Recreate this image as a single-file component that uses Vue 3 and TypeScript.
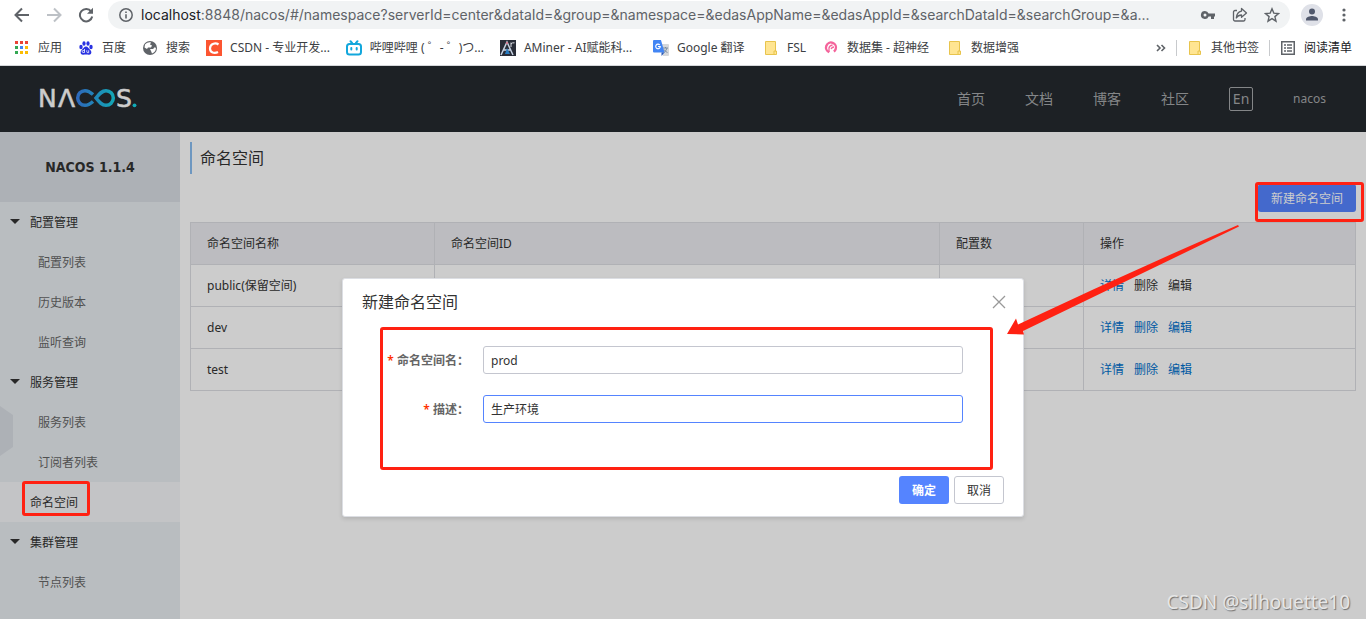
<script setup lang="ts">
import { ref } from 'vue'

interface Bookmark { icon: string; label: string }
interface MenuItem { label: string; kind: 'group' | 'sub' | 'active' }
interface Row { name: string; locked: boolean }

const url = '/nacos/#/namespace?serverId=center&dataId=&group=&namespace=&edasAppName=&edasAppId=&searchDataId=&searchGroup=&a...'

const bookmarks: Bookmark[] = [
  { icon: 'apps', label: '应用' },
  { icon: 'paw', label: '百度' },
  { icon: 'globe', label: '搜索' },
  { icon: 'csdn', label: 'CSDN - 专业开发...' },
  { icon: 'bili', label: '哔哩哔哩 (  ゜- ゜)つ...' },
  { icon: 'aminer', label: 'AMiner - AI赋能科...' },
  { icon: 'translate', label: 'Google 翻译' },
  { icon: 'folder', label: 'FSL' },
  { icon: 'ring', label: '数据集 - 超神经' },
  { icon: 'folder', label: '数据增强' },
]

const gridColors = ['#ea4335', '#ea4335', '#ea4335', '#34a853', '#4285f4', '#fbbc04', '#34a853', '#fbbc04', '#fbbc04']

const nav = ['首页', '文档', '博客', '社区']

const menu: MenuItem[] = [
  { label: '配置管理', kind: 'group' },
  { label: '配置列表', kind: 'sub' },
  { label: '历史版本', kind: 'sub' },
  { label: '监听查询', kind: 'sub' },
  { label: '服务管理', kind: 'group' },
  { label: '服务列表', kind: 'sub' },
  { label: '订阅者列表', kind: 'sub' },
  { label: '命名空间', kind: 'active' },
  { label: '集群管理', kind: 'group' },
  { label: '节点列表', kind: 'sub' },
]

const rows: Row[] = [
  { name: 'public(保留空间)', locked: true },
  { name: 'dev', locked: false },
  { name: 'test', locked: false },
]

const namespaceName = ref('prod')
const description = ref('生产环境')
</script>

<template>
  <div class="window">
    <header class="browser">
      <div class="toolbar">
        <button class="tool" aria-label="Back">
          <svg width="16" height="16" viewBox="0 0 16 16" fill="none" stroke="#5f6368" stroke-width="2"><path d="M15 8H2M8 1.500L1.500 8L8 14.500" /></svg>
        </button>
        <button class="tool" aria-label="Forward">
          <svg width="16" height="16" viewBox="0 0 16 16" fill="none" stroke="#bdc1c6" stroke-width="2"><path d="M1 8h13M8 1.500L14.500 8L8 14.500" /></svg>
        </button>
        <button class="tool" aria-label="Reload">
          <svg width="16" height="16" viewBox="0 0 16 16"><path d="M13.200 4.600A6.200 6.200 0 1 0 14.200 9.500" fill="none" stroke="#5f6368" stroke-width="2" /><path d="M15 .8v6H9z" fill="#5f6368" /></svg>
        </button>
        <div class="omnibox">
          <svg width="14" height="14" viewBox="0 0 14 14"><circle cx="7" cy="7" r="6.200" fill="none" stroke="#5f6368" stroke-width="1.500" /><path d="M7 6.200v4.300M7 3.500v1.600" stroke="#5f6368" stroke-width="1.600" /></svg>
          <span class="address"><b>localhost</b>:8848{{ url }}</span>
          <button class="tool" aria-label="Passwords">
            <svg width="16" height="16" viewBox="0 0 16 16" fill="#5f6368"><path fill-rule="evenodd" d="M5 4a4 4 0 1 0 3.600 5.500H11V12h3V9.500h1v-3H8.600A4 4 0 0 0 5 4zm0 2.500a1.500 1.500 0 1 1 0 3a1.500 1.500 0 0 1 0-3z" /></svg>
          </button>
          <button class="tool" aria-label="Share">
            <svg width="16" height="16" viewBox="0 0 16 16" fill="none" stroke="#5f6368" stroke-width="1.300" stroke-linejoin="round"><path d="M5 3.500H3A1.500 1.500 0 0 0 1.500 5v7.500A1.500 1.500 0 0 0 3 14h8.500a1.500 1.500 0 0 0 1.500-1.500V11" /><path d="M9.500 1.500L14.500 6L9.500 10.300V8C7 8 5.500 9 4.300 11C4.600 7.500 6.300 4.600 9.500 4.100z" /></svg>
          </button>
          <button class="tool" aria-label="Bookmark this page">
            <svg width="16" height="16" viewBox="0 0 16 16" fill="none" stroke="#5f6368" stroke-width="1.400"><path d="M8 1.800l1.800 4.300 4.700.4-3.600 3.100 1.100 4.600L8 11.700l-4 2.500 1.100-4.600L1.500 6.500l4.700-.4z" /></svg>
          </button>
        </div>
        <button class="avatar" aria-label="Profile">
          <svg width="22" height="22" viewBox="0 0 22 22"><circle cx="11" cy="11" r="11" fill="#dfe1e8" /><circle cx="11" cy="7.500" r="3" fill="#50586c" /><path d="M5 16.500v-1.300c0-2.200 4-3.200 6-3.200s6 1 6 3.200v1.300z" fill="#50586c" /></svg>
        </button>
        <button class="tool" aria-label="Menu">
          <svg width="16" height="16" viewBox="0 0 16 16" fill="#5f6368"><circle cx="8" cy="3" r="1.600" /><circle cx="8" cy="8" r="1.600" /><circle cx="8" cy="13" r="1.600" /></svg>
        </button>
      </div>

      <nav class="bookmarks">
        <a v-for="(b, i) in bookmarks" :key="i" href="#" class="bookmark" :class="b.icon">
          <svg width="16" height="16" viewBox="0 0 16 16">
            <g v-if="b.icon === 'apps'">
              <rect v-for="(c, n) in gridColors" :key="n" :x="1 + (n % 3) * 5" :y="1 + Math.floor(n / 3) * 5" width="3" height="3" :fill="c" />
            </g>
            <g v-else-if="b.icon === 'paw'" fill="#2932e1">
              <ellipse cx="3" cy="7" rx="1.700" ry="2.200" /><ellipse cx="6" cy="3.500" rx="1.600" ry="2.200" /><ellipse cx="10" cy="3.500" rx="1.600" ry="2.200" /><ellipse cx="13" cy="7" rx="1.700" ry="2.200" />
              <path d="M8 6.500c2 0 2.500 2 4.300 3.600c2 2 1 5-1.600 4.600c-2-.3-3.400-.3-5.400 0c-2.600.4-3.600-2.600-1.600-4.600C5.500 8.500 6 6.500 8 6.500z" />
              <path d="M6.500 9v3.500H5.200a1 1 0 0 1 0-2h1.200M8.800 10.300v1.600q0 .8 1 .8h.9v-2.400" fill="none" stroke="#fff" stroke-width=".8" />
            </g>
            <g v-else-if="b.icon === 'globe'">
              <circle cx="8" cy="8" r="7" fill="#5f6368" /><path d="M3 4.500c2-2 4-2.500 6-2l-1 2 2 1-1 2H6L5 9 2.500 7.500zM8 9h3l2-2 1 1.500c-.3 2.500-2 4.200-4 5l-1-2.500z" fill="#fff" />
            </g>
            <g v-else-if="b.icon === 'csdn'">
              <rect width="16" height="16" fill="#fc5531" /><path d="M12.500 4.500C10 2.700 4.300 3 4 8.200c-.2 4.500 4.500 5.500 8 3.700" fill="none" stroke="#fff" stroke-width="2.200" />
            </g>
            <g v-else-if="b.icon === 'bili'" fill="none" stroke="#12a7dc" stroke-width="2" stroke-linecap="round">
              <rect x="1" y="4" width="14" height="10.500" rx="2.500" /><path d="M4.500 1.200L6 3M11.500 1.200L10 3M5.300 8v1.600M10.700 8v1.600" />
            </g>
            <g v-else-if="b.icon === 'aminer'">
              <rect width="16" height="16" fill="#292d38" /><path d="M1 15L7 2l6 13M3.500 10h7" fill="none" stroke="#c9d4e4" stroke-width="1.500" /><path d="M5 14l2-6 3 6z" fill="#287bc0" /><path d="M11 7V2.500M11 4q1-1.500 3.500-1.200" fill="none" stroke="#dfe2e8" /><circle cx="7" cy="3" r="1" fill="#dc6a85" />
            </g>
            <g v-else-if="b.icon === 'translate'">
              <path d="M6 4h9a1 1 0 0 1 1 1v10a1 1 0 0 1-1 1h-5z" fill="#d5d7da" /><path d="M10 8h5M12.500 7v1M14 8q-.7 3-3 4.500M11 9.500q1.500 2.500 3.500 3" fill="none" stroke="#72879c" stroke-width=".9" />
              <path d="M1 0h7l3.500 12.500H1a1 1 0 0 1-1-1V1a1 1 0 0 1 1-1z" fill="#4285f4" /><path d="M8.500 16v-3.500h3z" fill="#2859b8" /><path d="M6.800 5A2.300 2.300 0 1 0 7.300 6.500H5" fill="none" stroke="#fff" stroke-width="1.100" />
            </g>
            <g v-else-if="b.icon === 'ring'">
              <circle cx="8" cy="7.500" r="5" fill="none" stroke="#f4649b" stroke-width="2.400" stroke-dasharray="26 6" transform="rotate(110 8 7.500)" /><path d="M6 12V8q.5-2.500 3.500-3M8 9q1-2 3-2" fill="none" stroke="#f4649b" stroke-width="1.300" />
            </g>
            <g v-else>
              <path d="M2.500 1.500h10v9.500h1v3.500h-11z" fill="#ffe592" stroke="#e8c44d" /><path d="M11 14.500v-3.500h2" fill="none" stroke="#e8c44d" />
            </g>
          </svg>
          <span>{{ b.label }}</span>
        </a>
        <button class="more" aria-label="More bookmarks">
          <svg width="10" height="8" viewBox="0 0 10 8" fill="none" stroke="#5f6368" stroke-width="1.600"><path d="M1 1l3 3-3 3M5.500 1l3 3-3 3" /></svg>
        </button>
        <span class="divider"></span>
        <a href="#" class="bookmark">
          <svg width="16" height="16" viewBox="0 0 16 16"><path d="M2.500 1.500h10v9.500h1v3.500h-11z" fill="#ffe592" stroke="#e8c44d" /><path d="M11 14.500v-3.500h2" fill="none" stroke="#e8c44d" /></svg>
          <span>其他书签</span>
        </a>
        <span class="divider"></span>
        <a href="#" class="bookmark dark">
          <svg width="16" height="16" viewBox="0 0 16 16" fill="none" stroke="#5f6368" stroke-width="1.500"><rect x="1.750" y="1.750" width="12.500" height="12.500" /><path d="M4 5h2M7 5h5M4 8h2M7 8h5M4 11h2M7 11h5" /></svg>
          <span>阅读清单</span>
        </a>
      </nav>
    </header>

    <div class="app">
      <header class="topbar">
        <svg class="logo" width="106" height="38" viewBox="-4 -8 106 38" role="img" aria-label="NACOS">
          <defs>
            <linearGradient id="loop" x1="36" x2="76" y1="0" y2="0" gradientUnits="userSpaceOnUse"><stop offset="0" stop-color="#3b80ea" /><stop offset="1" stop-color="#16d5e4" /></linearGradient>
          </defs>
          <text x="-2" y="19">N</text>
          <text x="18" y="19">Λ</text>
          <path d="M53 6.500C50.500 4.300 48.500 2.700 45 2.700a7.300 7.300 0 0 0 0 14.600c3.500 0 5.500-1.600 8-3.800M56 10C59.500 5.500 62 2.700 66 2.700a7.300 7.300 0 0 1 0 14.600C62 17.300 59.500 14.500 56 10z" fill="none" stroke="url(#loop)" stroke-width="3.500" />
          <text x="76" y="19">S</text>
          <circle cx="94.500" cy="17.300" r="1.900" fill="#16d5e4" />
        </svg>
        <nav class="topnav">
          <a v-for="n in nav" :key="n" href="#">{{ n }}</a>
          <button class="lang">En</button>
          <a href="#" class="user">nacos</a>
        </nav>
      </header>

      <div class="body">
        <aside class="sidebar">
          <h1>NACOS 1.1.4</h1>
          <a v-for="m in menu" :key="m.label" href="#" class="item" :class="m.kind">
            <span class="text">{{ m.label }}</span>
          </a>
          <button class="handle" aria-label="Collapse sidebar"></button>
        </aside>

        <main class="main">
          <h2>命名空间</h2>
          <div class="actions">
            <span class="callout"><button class="primary">新建命名空间</button></span>
          </div>
          <table>
            <thead>
              <tr>
                <th class="c-name">命名空间名称</th>
                <th>命名空间ID</th>
                <th class="c-count">配置数</th>
                <th class="c-ops">操作</th>
              </tr>
            </thead>
            <tbody>
              <tr v-for="r in rows" :key="r.name">
                <td>{{ r.name }}</td>
                <td></td>
                <td></td>
                <td>
                  <div class="ops" :class="{ locked: r.locked }">
                    <a href="#">详情</a><a href="#">删除</a><a href="#">编辑</a>
                  </div>
                </td>
              </tr>
            </tbody>
          </table>
        </main>
      </div>

      <div class="overlay">
        <form class="dialog" role="dialog" aria-labelledby="dialog-title" @submit.prevent>
          <div class="dialog-head">
            <h3 id="dialog-title">新建命名空间</h3>
            <button type="button" class="close" aria-label="Close">
              <svg width="14" height="14" viewBox="0 0 14 14" fill="none" stroke="#999" stroke-width="1.300"><path d="M1 1l12 12M13 1L1 13" /></svg>
            </button>
          </div>
          <div class="fields">
            <label for="ns-name"><i>*</i> 命名空间名：</label>
            <input id="ns-name" v-model="namespaceName" type="text" />
            <label for="ns-desc"><i>*</i> 描述：</label>
            <input id="ns-desc" v-model="description" type="text" class="active" />
          </div>
          <div class="dialog-foot">
            <button type="submit" class="ok">确定</button>
            <button type="button" class="cancel">取消</button>
          </div>
        </form>
      </div>

      <svg class="arrow" width="232" height="112" viewBox="0 0 232 112"><path d="M231 0L232 1.500L16 106L17 109.500L0 109L9 93.500L11 99.500Q120 48 231 0z" fill="#ff2112" /></svg>
      <div class="watermark">CSDN @silhouette10</div>
    </div>
  </div>
</template>

<style>
body {
  background: #fff;
}
</style>

<style scoped>
.window {
  min-height: 100vh;
  display: flex;
  flex-direction: column;
  font: 12px/20px "Noto Sans", "Noto Sans CJK SC", sans-serif;
  color: #333;
}
.window *,
.window *::before,
.window *::after {
  box-sizing: border-box;
}
a {
  color: inherit;
  text-decoration: none;
}
button {
  font: inherit;
  padding: 0;
  border: 0;
  background: none;
}
svg {
  display: block;
  flex: none;
}
h1, h2, h3 {
  margin: 0;
}

/* browser chrome */
.browser {
  height: 66px;
  border-bottom: 1px solid #d5d7da;
}
.toolbar {
  height: 30px;
  display: flex;
  align-items: center;
  gap: 16px;
  padding: 0 14px;
}
.omnibox {
  flex: 1;
  min-width: 0;
  height: 28px;
  margin: 0 -5px 0 -2px;
  border-radius: 14px;
  background: #f1f3f4;
  display: flex;
  align-items: center;
  gap: 16px;
  padding: 0 10px 0 11px;
}
.address {
  flex: 1;
  min-width: 0;
  margin: 0 -8px;
  overflow: hidden;
  white-space: nowrap;
  font-family: Inter, sans-serif;
  font-size: 14px;
  color: #5f6368;
}
.address b {
  font-weight: 400;
  color: #202124;
}
.avatar {
  margin-right: -3px;
}
.bookmarks {
  height: 35px;
  display: flex;
  align-items: center;
  gap: 16px;
  padding: 0 14px;
  color: #3c4043;
}
.bookmark {
  display: flex;
  align-items: center;
  gap: 8px;
  white-space: nowrap;
}
.bookmark.dark {
  color: #202124;
}
.bili {
  min-width: 135px;
}
.aminer {
  min-width: 137px;
}
.translate {
  min-width: 94px;
}
.folder {
  min-width: 44px;
}
.ring {
  min-width: 108px;
}
.more {
  margin-left: auto;
}
.divider {
  width: 1px;
  height: 16px;
  margin: 0 -6px;
  background: #c8cacd;
}

/* console */
.app {
  flex: 1;
  display: flex;
  flex-direction: column;
  position: relative;
}
.topbar {
  height: 66px;
  display: flex;
  align-items: center;
  justify-content: space-between;
  padding: 0 40px 0 36px;
  background: #252a2f;
  color: #a6a8aa;
}
.logo text {
  font: 25px "DejaVu Sans", sans-serif;
  fill: #fff;
  stroke: #fff;
  stroke-width: 0.5px;
}
.topnav {
  display: flex;
  align-items: center;
  gap: 40px;
  font-size: 14px;
}
.lang {
  width: 24px;
  height: 24px;
  border: 1px solid #a6a8aa;
  border-radius: 2px;
  color: inherit;
  line-height: 20px;
}
.user {
  font-size: 12px;
}
.body {
  flex: 1;
  display: flex;
}
.sidebar {
  position: relative;
  width: 180px;
  flex: none;
  background: #e8edf1;
}
.sidebar h1 {
  background: #d9dee4;
  font: bold 14px/70px "DejaVu Sans Condensed", "DejaVu Sans", sans-serif;
  text-align: center;
}
.item {
  display: flex;
  align-items: center;
  height: 40px;
  padding: 2px 0 0 30px;
  position: relative;
}
.item.sub {
  padding-left: 38px;
  color: #666;
}
.item.active {
  background: #f4f6f8;
}
.item.group::before {
  content: "";
  position: absolute;
  left: 10px;
  top: 17px;
  border: 5px solid transparent;
  border-top-color: #333;
  border-bottom: 0;
}
.item.active::after {
  content: "";
  position: absolute;
  z-index: 3;
  left: 22px;
  top: -1px;
  width: 68px;
  height: 35px;
  border: 3px solid #ff2112;
  border-radius: 3px;
}
.handle {
  position: absolute;
  left: 0;
  top: 274px;
  width: 13px;
  height: 50px;
  background: #d9dee4;
  clip-path: polygon(0 0, 100% 18%, 100% 82%, 0 100%);
}
.main {
  flex: 1;
  min-width: 0;
  padding: 10px;
}
.main h2 {
  border-left: 2px solid #8abdf0;
  padding-left: 8px;
  font-size: 16px;
  font-weight: 400;
  line-height: 32px;
}
.actions {
  display: flex;
  justify-content: flex-end;
  padding: 10px 0;
}
.callout {
  position: relative;
}
.callout::after {
  content: "";
  position: absolute;
  z-index: 3;
  inset: -2px -8px -10px -3px;
  border: 3px solid #ff2112;
  border-radius: 3px;
  pointer-events: none;
}
.primary {
  display: block;
  height: 28px;
  padding: 2px 13px 0;
  border-radius: 3px;
  background: #5584ff;
  color: #fff;
}
table {
  width: 100%;
  table-layout: fixed;
  border-collapse: collapse;
}
th, td {
  height: 42px;
  padding: 0 16px;
  border: 1px solid #dcdee3;
  text-align: left;
  font-weight: 400;
}
th {
  background: #ebecf0;
}
.c-name {
  width: 244px;
}
.c-count {
  width: 144px;
}
.c-ops {
  width: 272px;
}
.ops {
  display: flex;
  gap: 10px;
  color: #0070cc;
}
.ops.locked a + a {
  color: #333;
}

/* dialog */
.overlay {
  position: absolute;
  z-index: 2;
  inset: 0;
  background: rgba(0, 0, 0, 0.2);
  display: flex;
  justify-content: center;
  align-items: flex-start;
  padding-top: 212px;
}
.dialog {
  width: 682px;
  max-width: 100%;
  padding: 0 19px 12px;
  border: 1px solid #dcdee3;
  border-radius: 3px;
  background: #fff;
  box-shadow: 0 2px 4px rgba(0, 0, 0, 0.12);
}
.dialog-head {
  height: 48px;
  padding-bottom: 2px;
  display: flex;
  align-items: center;
  justify-content: space-between;
}
.dialog-head h3 {
  font-size: 16px;
  font-weight: 400;
}
.close {
  padding: 2px;
  margin-right: -4px;
}
.fields {
  display: grid;
  grid-template-columns: 86px 1fr;
  align-items: center;
  gap: 21px 14px;
  margin: 0 11px 0 18px;
  padding: 16px 27px 44px 0;
  border: 3px solid #ff2112;
  border-radius: 3px;
}
.fields label {
  padding-top: 2px;
  text-align: right;
  white-space: nowrap;
  font-weight: 600;
  color: #666;
}
.fields i {
  font-style: normal;
  color: #ff3000;
}
.fields input {
  width: 100%;
  height: 28px;
  padding: 0 7px;
  border: 1px solid #c4c6cf;
  border-radius: 3px;
  outline: 0;
  background: #fff;
  font: inherit;
  color: #333;
}
.fields input.active {
  border-color: #5584ff;
}
.dialog-foot {
  display: flex;
  justify-content: flex-end;
  gap: 5px;
  padding-top: 6px;
}
.dialog-foot button {
  width: 50px;
  height: 28px;
  padding-top: 1px;
  border-radius: 3px;
}
.dialog-foot .ok {
  background: #5584ff;
  color: #fff;
  font-weight: 600;
}
.dialog-foot .cancel {
  border: 1px solid #c4c6cf;
  color: #333;
}
.arrow {
  position: absolute;
  z-index: 3;
  left: calc(50% + 324px);
  top: 159px;
}
.watermark {
  position: absolute;
  z-index: 3;
  right: 16px;
  bottom: 4px;
  font-size: 19px;
  line-height: 26px;
  color: #e6e6e6;
  text-shadow: 1px 1px 1px #707070;
}
</style>
